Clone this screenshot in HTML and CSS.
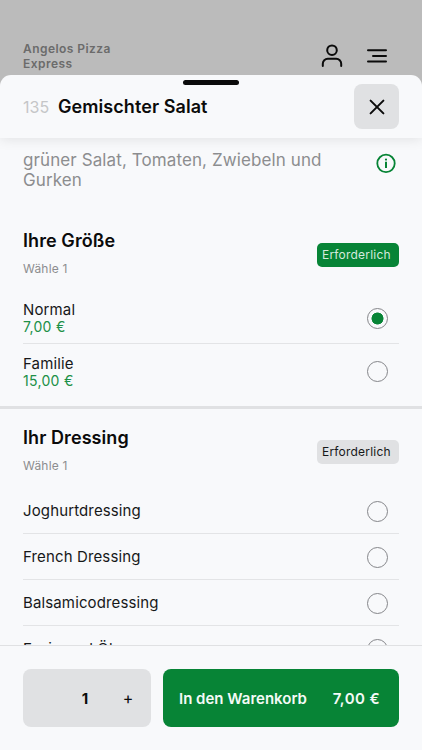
FILE: index.html
```html
<!DOCTYPE html>
<html lang="de">

<head>
    <meta charset="UTF-8" />
    <meta name="viewport" content="width=device-width, initial-scale=1.0" />
    <title>Gemischter Salat</title>
    <link rel="stylesheet" href="styles.css">
</head>

<body>
    <header class="topbar">
        <div class="shop-name">Angelos Pizza<br>Express</div>
        <div class="topbar-icons">
            <svg width="22" height="24" viewBox="0 0 22 24">
                <circle cx="11" cy="6.2" r="4.8" />
                <path d="M1.8 22v-2.2a5 5 0 0 1 5-5h8.4a5 5 0 0 1 5 5V22" />
            </svg>
            <svg width="22" height="24" viewBox="0 0 22 24">
                <path d="M2 6.2h18M7 12h13M2 17.6h18" />
            </svg>
        </div>
    </header>

    <main class="sheet">
        <div class="sheet-header">
            <span class="handle"></span>
            <span class="item-number">135</span>
            <h1>Gemischter Salat</h1>
            <button type="button" class="close-btn" aria-label="Schließen">
                <svg width="16" height="16" viewBox="0 0 16 16">
                    <path d="M1.6 1.6l12.8 12.8M14.4 1.6L1.6 14.4" />
                </svg>
            </button>
        </div>

        <div class="sheet-body">
            <div class="description">
                <p>grüner Salat, Tomaten, Zwiebeln und Gurken</p>
                <svg class="info" width="20" height="20" viewBox="0 0 20 20">
                    <circle class="ring" cx="10" cy="10.4" r="8.7" />
                    <circle cx="10" cy="6.6" r="1.1" />
                    <path d="M9 8.8h2v6.2H9z" />
                </svg>
            </div>

            <section class="group">
                <div class="group-head">
                    <div>
                        <h2>Ihre Größe</h2>
                        <p class="hint">Wähle 1</p>
                    </div>
                    <span class="badge active">Erforderlich</span>
                </div>
                <label class="option priced">
                    <span>Normal<span class="price">7,00 €</span></span>
                    <input type="radio" name="size" checked />
                </label>
                <label class="option priced">
                    <span>Familie<span class="price">15,00 €</span></span>
                    <input type="radio" name="size" />
                </label>
            </section>

            <section class="group dressing">
                <div class="group-head">
                    <div>
                        <h2>Ihr Dressing</h2>
                        <p class="hint">Wähle 1</p>
                    </div>
                    <span class="badge">Erforderlich</span>
                </div>
                <label class="option">
                    <span>Joghurtdressing</span>
                    <input type="radio" name="dressing" />
                </label>
                <label class="option">
                    <span>French Dressing</span>
                    <input type="radio" name="dressing" />
                </label>
                <label class="option">
                    <span>Balsamicodressing</span>
                    <input type="radio" name="dressing" />
                </label>
                <label class="option">
                    <span>Essig und Öl</span>
                    <input type="radio" name="dressing" />
                </label>
            </section>
        </div>

        <footer class="sheet-footer">
            <div class="quantity">
                <span class="count">1</span>
                <button type="button" class="plus" aria-label="Mehr">+</button>
            </div>
            <button type="button" class="cart-btn">
                <span>In den Warenkorb</span>
                <span class="total">7,00 €</span>
            </button>
        </footer>
    </main>
</body>

</html>
```
FILE: styles.css
```css
* {
    box-sizing: border-box;
}

body {
    margin: 0;
    height: 750px;
    overflow: hidden;
    display: flex;
    flex-direction: column;
    background: #bbb;
    color: #161819;
    font-family: Inter, "Liberation Sans", sans-serif;
}

h1,
h2,
p {
    margin: 0;
}

button {
    border: none;
    padding: 0;
    font-family: inherit;
    color: inherit;
    cursor: pointer;
}

.topbar {
    height: 75px;
    flex: none;
    display: flex;
    justify-content: space-between;
    align-items: flex-start;
    padding: 41px 34px 0 23px;
}

.shop-name {
    font-size: 12px;
    line-height: 15px;
    font-weight: 600;
    letter-spacing: 0.45px;
    color: #6b6b6b;
}

.topbar-icons {
    display: flex;
    gap: 23px;
    padding-top: 3px;
}

.topbar-icons svg,
.close-btn svg {
    display: block;
    fill: none;
    stroke: #0b0b0b;
    stroke-width: 2;
    stroke-linecap: round;
}

.sheet {
    flex: 1;
    min-height: 0;
    display: flex;
    flex-direction: column;
    background: #f8f9fb;
    border-radius: 11px 11px 0 0;
    overflow: hidden;
}

.sheet-header {
    position: relative;
    z-index: 1;
    height: 63px;
    flex: none;
    display: flex;
    align-items: center;
    padding: 0 23px;
    box-shadow: 0 1px 12px rgba(0, 0, 0, 0.1);
}

.handle {
    position: absolute;
    top: 5px;
    left: 183px;
    width: 56px;
    height: 5px;
    border-radius: 3px;
    background: #0b0b0b;
}

.item-number {
    width: 35px;
    font-size: 16px;
    color: #c5c6c8;
}

h1 {
    flex: 1;
    font-size: 18px;
    font-weight: 600;
    letter-spacing: 0.07px;
    color: #0b0b0b;
}

.close-btn {
    width: 45px;
    height: 45px;
    display: flex;
    align-items: center;
    justify-content: center;
    border-radius: 8px;
    background: #e0e1e3;
}

.sheet-body {
    flex: 1;
    min-height: 0;
    overflow: hidden;
}

.description {
    height: 88px;
    display: flex;
    justify-content: space-between;
    align-items: flex-start;
    padding: 12px 26px 0 23px;
    font-size: 17px;
    line-height: 20px;
    letter-spacing: 0.1px;
    color: #8c8d8f;
}

.description p {
    width: 320px;
}

.info {
    margin-top: 3px;
    fill: #078436;
}

.info .ring {
    fill: none;
    stroke: #078436;
    stroke-width: 1.8;
}

.group {
    height: 183px;
    padding: 0 23px;
    border-bottom: 3px solid #e0e1e3;
}

.group.dressing {
    height: auto;
    padding-top: 14px;
    border-bottom: none;
}

.group-head {
    height: 66px;
    display: flex;
    justify-content: space-between;
    padding-top: 3px;
}

.group.dressing .group-head {
    height: 65px;
}

h2 {
    font-size: 18px;
    line-height: 24px;
    font-weight: 600;
    letter-spacing: 0.08px;
    color: #0b0b0b;
}

.hint {
    margin-top: 8px;
    font-size: 12px;
    line-height: 16px;
    letter-spacing: 0.2px;
    color: #8c8d8f;
}

.badge {
    width: 82px;
    height: 24px;
    margin-top: 14px;
    padding-left: 5px;
    border-radius: 5px;
    background: #e0e1e3;
    font-size: 12px;
    line-height: 24px;
    letter-spacing: 0.2px;
}

.badge.active {
    background: #078436;
    color: #d5eadd;
}

.option {
    height: 46px;
    display: flex;
    justify-content: space-between;
    align-items: center;
    padding: 1px 11px 0 0;
    border-bottom: 1px solid #e3e4e6;
    font-size: 15px;
    line-height: 18px;
    letter-spacing: 0.13px;
}

.option.priced {
    height: 52px;
}

.option.priced:last-child {
    height: 54px;
    border-bottom: none;
}

.price {
    display: block;
    font-size: 14px;
    line-height: 16px;
    letter-spacing: 0.3px;
    color: #209047;
}

.option input {
    appearance: none;
    flex: none;
    width: 21px;
    height: 21px;
    margin: 0;
    border: 1px solid #85868a;
    border-radius: 50%;
}

.option input:checked {
    background: radial-gradient(circle, #078436 5.7px, transparent 6.3px);
}

.sheet-footer {
    height: 105px;
    flex: none;
    display: flex;
    gap: 12px;
    padding: 23px 23px;
    border-top: 1px solid #e0e1e3;
}

.quantity {
    width: 128px;
    height: 58px;
    display: flex;
    align-items: center;
    justify-content: flex-end;
    border-radius: 8px;
    background: #e0e1e3;
    color: #0b0b0b;
}

.count {
    width: 20px;
    text-align: center;
    font-size: 15px;
    font-weight: 700;
}

.plus {
    width: 56px;
    padding-left: 10px;
    background: none;
    font-size: 16px;
}

.cart-btn {
    flex: 1;
    height: 58px;
    display: flex;
    align-items: center;
    justify-content: space-between;
    padding: 0 19px 0 16px;
    border-radius: 8px;
    background: #078436;
    color: #f4faf6;
    font-size: 15px;
    font-weight: 600;
}

.total {
    letter-spacing: 0.4px;
}
```
